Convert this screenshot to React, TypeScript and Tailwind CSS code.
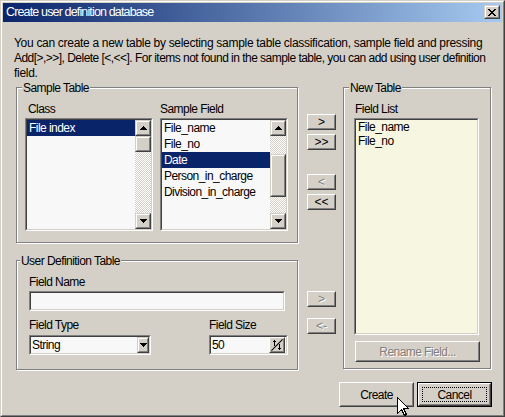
import React from 'react';

const FONT = "font-['Liberation_Sans',Arial,sans-serif]";

// classic win2000 bevels, built from two nested 1px borders
function Raised({
  className = '',
  innerClassName = '',
  button = false,
  children,
}: {
  className?: string;
  innerClassName?: string;
  button?: boolean;
  children?: React.ReactNode;
}) {
  return (
    <div
      className={`border ${button ? 'border-t-white border-l-white' : 'border-t-[#d4d0c8] border-l-[#d4d0c8]'} border-r-[#404040] border-b-[#404040] bg-[#d4d0c8] ${className}`}
    >
      <div
        className={`border ${button ? 'border-t-[#d4d0c8] border-l-[#d4d0c8]' : 'border-t-white border-l-white'} border-r-[#808080] border-b-[#808080] w-full h-full flex items-center justify-center ${innerClassName}`}
      >
        {children}
      </div>
    </div>
  );
}

function Sunken({
  className = '',
  innerClassName = '',
  children,
}: {
  className?: string;
  innerClassName?: string;
  children?: React.ReactNode;
}) {
  return (
    <div className={`border border-t-[#808080] border-l-[#808080] border-r-white border-b-white ${className}`}>
      <div
        className={`border border-t-[#404040] border-l-[#404040] border-r-[#d4d0c8] border-b-[#d4d0c8] w-full h-full ${innerClassName}`}
      >
        {children}
      </div>
    </div>
  );
}

const Tri = ({ down = false }: { down?: boolean }) => (
  <svg width="7" height="4" viewBox="0 0 7 4" shapeRendering="crispEdges">
    {down ? (
      <>
        <rect x="0" y="0" width="7" height="1" />
        <rect x="1" y="1" width="5" height="1" />
        <rect x="2" y="2" width="3" height="1" />
        <rect x="3" y="3" width="1" height="1" />
      </>
    ) : (
      <>
        <rect x="3" y="0" width="1" height="1" />
        <rect x="2" y="1" width="3" height="1" />
        <rect x="1" y="2" width="5" height="1" />
        <rect x="0" y="3" width="7" height="1" />
      </>
    )}
  </svg>
);

const Checker = ({ h }: { h: string }) => (
  <div
    className={`${h} bg-[image:repeating-conic-gradient(#ffffff_0_25%,#d4d0c8_0_50%)] bg-[length:2px_2px]`}
  />
);

function GroupBox({
  title,
  titleLeft,
  className = '',
  children,
}: {
  title: string;
  titleLeft: string;
  className?: string;
  children?: React.ReactNode;
}) {
  return (
    <div
      className={`relative border border-[#808080] shadow-[inset_1px_1px_0_#ffffff,1px_1px_0_#ffffff] ${className}`}
    >
      <span className={`absolute top-[-7px] ${titleLeft} px-[1px] leading-[14px] bg-[#d4d0c8] whitespace-nowrap`}>
        {title}
      </span>
      {children}
    </div>
  );
}

function ListBox({
  items,
  selected,
  thumbTop,
  thumbH,
  trackAbove,
}: {
  items: string[];
  selected: number;
  thumbTop: string;
  thumbH: string;
  trackAbove: boolean;
}) {
  return (
    <Sunken className="w-[128px] h-[113px]" innerClassName="bg-[#f8f8f8] flex">
      <div className="flex-1 flex flex-col">
        {items.map((it, i) => (
          <div
            key={it}
            className={`h-[16px] leading-[16px] pl-[2px] whitespace-nowrap ${i === selected ? 'bg-[#0a246a] text-white' : ''}`}
          >
            {it}
          </div>
        ))}
      </div>
      <div className="w-[16px] flex flex-col">
        <Raised className="h-[16px]">
          <Tri />
        </Raised>
        {trackAbove && <Checker h={thumbTop} />}
        <Raised className={thumbH} />
        <div className="flex-1 bg-[image:repeating-conic-gradient(#ffffff_0_25%,#d4d0c8_0_50%)] bg-[length:2px_2px]" />
        <Raised className="h-[16px]">
          <Tri down />
        </Raised>
      </div>
    </Sunken>
  );
}

function SmallButton({ label, disabled = false, className = '' }: { label: string; disabled?: boolean; className?: string }) {
  return (
    <Raised button className={`w-[29px] h-[16px] ${className}`}>
      <span
        className={`leading-none tracking-[0px] ${disabled ? 'text-[#808080] [text-shadow:1px_1px_0_#ffffff]' : ''}`}
      >
        {label}
      </span>
    </Raised>
  );
}

const CloseGlyph = () => (
  <svg width="8" height="7" viewBox="0 0 8 7" shapeRendering="crispEdges">
    <rect x="0" y="0" width="2" height="1" />
    <rect x="6" y="0" width="2" height="1" />
    <rect x="1" y="1" width="2" height="1" />
    <rect x="5" y="1" width="2" height="1" />
    <rect x="2" y="2" width="4" height="1" />
    <rect x="3" y="3" width="2" height="1" />
    <rect x="2" y="4" width="4" height="1" />
    <rect x="1" y="5" width="2" height="1" />
    <rect x="5" y="5" width="2" height="1" />
    <rect x="0" y="6" width="2" height="1" />
    <rect x="6" y="6" width="2" height="1" />
  </svg>
);

const SpinGlyph = () => (
  <svg width="14" height="14" viewBox="0 0 14 14" shapeRendering="crispEdges">
    <line x1="0.5" y1="13.5" x2="13.5" y2="0.5" stroke="#000" strokeWidth="1.2" shapeRendering="auto" />
    <rect x="3" y="1" width="2" height="1" />
    <rect x="2" y="2" width="4" height="1" />
    <rect x="1" y="3" width="6" height="1" />
    <rect x="3" y="4" width="2" height="4" />
    <rect x="9" y="6" width="2" height="4" />
    <rect x="7" y="10" width="6" height="1" />
    <rect x="8" y="11" width="4" height="1" />
    <rect x="9" y="12" width="2" height="1" />
  </svg>
);

const Cursor = () => (
  <svg
    className="absolute left-[397px] top-[397px]"
    width="13"
    height="20"
    viewBox="0 0 13 20"
    shapeRendering="crispEdges"
  >
    <path d="M0.5 0.5 L0.5 16.5 L4.5 12.5 L7.5 18.5 L9.5 17.5 L6.5 11.5 L11.5 11.5 Z" fill="#fff" stroke="#000" strokeWidth="1" />
  </svg>
);

export default function App() {
  return (
    <div className={`w-[505px] h-[417px] relative overflow-hidden bg-[#d4d0c8] text-black text-[12px] tracking-[-0.55px] ${FONT}`}>
      <div className="w-full h-full border border-t-[#d4d0c8] border-l-[#d4d0c8] border-r-[#404040] border-b-[#404040]">
        <div className="w-full h-full border border-t-white border-l-white border-r-[#808080] border-b-[#808080] p-[1px] flex flex-col">
          {/* title bar */}
          <div className="h-[19px] flex items-start justify-between bg-[linear-gradient(to_right,#0a246a,#a6caf0)] pl-[3px]">
            <span className="text-white text-[12.5px] leading-[19px] tracking-[-0.85px] whitespace-nowrap">
              Create user definition database
            </span>
            <Raised className="w-[16px] h-[14px] mt-[2px] mr-[2px]">
              <CloseGlyph />
            </Raised>
          </div>

          {/* body */}
          <div className="flex flex-col pt-[14px]">
            <p className="pl-[11px] leading-[15px] tracking-[-0.3px] whitespace-nowrap">
              You can create a new table by selecting sample table classification, sample field and pressing
              <br />
              <span className="tracking-[-0.53px]">
                Add[&gt;,&gt;&gt;], Delete [&lt;,&lt;&lt;]. For items not found in the sample table, you can add using user definition
              </span>
              <br />
              field.
            </p>

            <div className="mt-[6px] ml-[13px] flex flex-col">
              <div className="flex items-start">
                {/* left column */}
                <div className="w-[282px] flex flex-col">
                  <GroupBox title="Sample Table" titleLeft="left-[5px]" className="h-[156px]">
                    <div className="flex gap-[7px] pl-[8px] pt-[13px]">
                      <div className="flex flex-col">
                        <div className="h-[16px] leading-[16px] pl-[3px] mb-[1px]">Class</div>
                        <ListBox items={['File index']} selected={0} thumbTop="" thumbH="h-[16px]" trackAbove={false} />
                      </div>
                      <div className="flex flex-col">
                        <div className="h-[16px] leading-[16px] mb-[1px]">Sample Field</div>
                        <ListBox
                          items={['File_name', 'File_no', 'Date', 'Person_in_charge', 'Division_in_charge']}
                          selected={2}
                          thumbTop="h-[18px]"
                          thumbH="h-[43px]"
                          trackAbove
                        />
                      </div>
                    </div>
                  </GroupBox>

                  <GroupBox title="User Definition Table" titleLeft="left-[3px]" className="mt-[17px] h-[110px]">
                    <div className="flex flex-col pl-[12px] pt-[13px]">
                      <div className="h-[16px] leading-[16px]">Field Name</div>
                      <Sunken className="mt-[1px] w-[256px] h-[20px]" innerClassName="bg-[#f8f8f8]" />
                      <div className="flex mt-[6px]">
                        <div className="w-[122px] flex flex-col">
                          <div className="h-[16px] leading-[16px]">Field Type</div>
                          <Sunken className="mt-[2px] w-[122px] h-[20px]" innerClassName="bg-[#f8f8f8] flex">
                            <span className="flex-1 pl-[1px] leading-[16px]">String</span>
                            <Raised className="w-[12px] h-[16px]">
                              <Tri down />
                            </Raised>
                          </Sunken>
                        </div>
                        <div className="ml-[58px] flex flex-col">
                          <div className="h-[16px] leading-[16px]">Field Size</div>
                          <Sunken className="mt-[2px] w-[79px] h-[20px]" innerClassName="bg-[#f8f8f8] flex">
                            <span className="flex-1 pl-[1px] leading-[16px]">50</span>
                            <Raised button className="w-[16px] h-[16px] mr-[1px]">
                              <SpinGlyph />
                            </Raised>
                          </Sunken>
                        </div>
                      </div>
                    </div>
                  </GroupBox>
                </div>

                {/* middle buttons */}
                <div className="ml-[9px] w-[29px] pt-[27px] flex flex-col">
                  <SmallButton label=">" />
                  <SmallButton label=">>" className="mt-[4px]" />
                  <SmallButton label="<" disabled className="mt-[24px]" />
                  <SmallButton label="<<" className="mt-[4px]" />
                  <SmallButton label=">" disabled className="mt-[81px]" />
                  <SmallButton label="<-" disabled className="mt-[11px]" />
                </div>

                {/* right column */}
                <GroupBox title="New Table" titleLeft="left-[5px]" className="ml-[7px] w-[148px] h-[282px]">
                  <div className="flex flex-col pl-[10px] pt-[13px]">
                    <div className="h-[16px] leading-[16px] pl-[1px] mb-[1px]">Field List</div>
                    <Sunken className="w-[125px] h-[217px]" innerClassName="bg-[#f7f7e1] pl-[2px] leading-[14px]">
                      <div>File_name</div>
                      <div>File_no</div>
                    </Sunken>
                    <Raised button className="mt-[6px] ml-[1px] w-[125px] h-[21px]">
                      <span className="text-[#808080] [text-shadow:1px_1px_0_#ffffff]">Rename Field...</span>
                    </Raised>
                  </div>
                </GroupBox>
              </div>

              {/* dialog buttons */}
              <div className="mt-[12px] ml-[323px] flex gap-[3px]">
                <Raised button className="w-[75px] h-[25px]">
                  <span>Create</span>
                </Raised>
                <div className="w-[75px] h-[25px] border border-black">
                  <Raised button className="w-full h-full" innerClassName="p-[2px]">
                    <div className="w-full h-full border border-dotted border-black flex items-center justify-center">
                      Cancel
                    </div>
                  </Raised>
                </div>
              </div>
            </div>
          </div>
        </div>
      </div>
      <Cursor />
    </div>
  );
}
